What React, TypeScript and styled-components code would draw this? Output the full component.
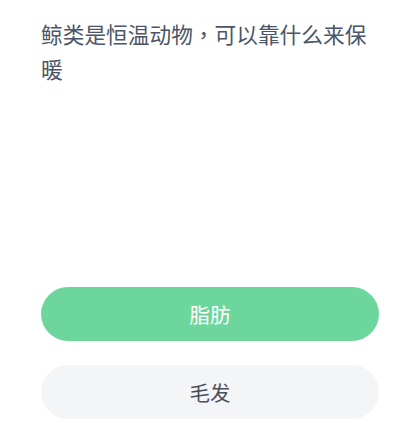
import React from "react";
import styled, { createGlobalStyle } from "styled-components";

const GlobalStyle = createGlobalStyle`
  html, body {
    margin: 0;
    padding: 0;
    background: #ffffff;
  }
  body {
    font-family: "Noto Sans CJK SC", "Noto Sans", sans-serif;
  }
`;

const Page = styled.div`
  width: 400px;
  height: 439px;
  box-sizing: border-box;
  padding: 16px 21px 0 41px;
  display: flex;
  flex-direction: column;
  background: #ffffff;
`;

const Question = styled.div`
  font-size: 21.7px;
  line-height: 35px;
  color: #4b5567;
  padding-right: 6px;
`;

// 逗号居中显示
const Punct = styled.span`
  font-family: "Noto Sans CJK TC", "Noto Sans CJK SC", sans-serif;
`;

const Options = styled.div`
  margin-top: 201px;
  display: flex;
  flex-direction: column;
  gap: 24px;
`;

const Option = styled.div<{ $active?: boolean }>`
  height: 54px;
  border-radius: 27px;
  display: flex;
  align-items: center;
  justify-content: center;
  font-size: 20.5px;
  background: ${(p) => (p.$active ? "#6dd69c" : "#f4f5f7")};
  color: ${(p) => (p.$active ? "#ffffff" : "#4a4f5b")};
`;

const options = [
  { label: "脂肪", active: true },
  { label: "毛发", active: false },
];

export default function App() {
  return (
    <>
      <GlobalStyle />
      <Page>
        <Question>
          鲸类是恒温动物<Punct>，</Punct>可以靠什么来保暖
        </Question>
        <Options>
          {options.map((o) => (
            <Option key={o.label} $active={o.active}>
              {o.label}
            </Option>
          ))}
        </Options>
      </Page>
    </>
  );
}
